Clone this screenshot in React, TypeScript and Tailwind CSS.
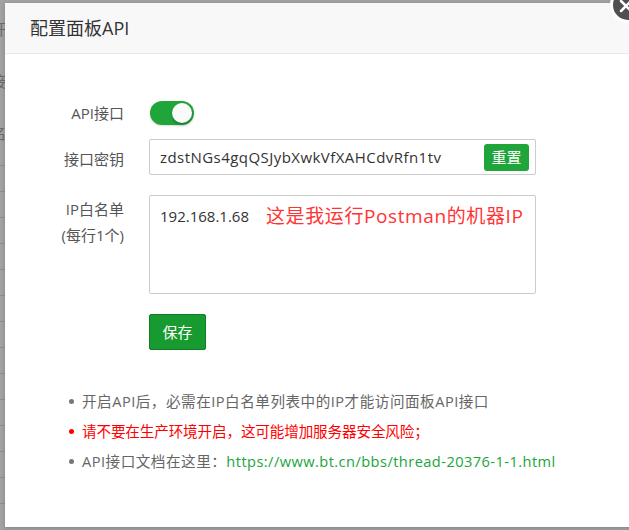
import React from "react";

const font = {
  fontFamily: '"Open Sans", "Noto Sans CJK SC", sans-serif',
};

function Toggle() {
  return (
    <div className="relative w-[44px] h-[24px] rounded-full bg-[#20a53a] shadow-[0_1px_2px_rgba(0,0,0,0.15)]">
      <div className="absolute right-[2px] top-[2px] w-[20px] h-[20px] rounded-full bg-[#fafafa] shadow-[0_2px_3px_rgba(0,0,0,0.25)]" />
    </div>
  );
}

function Bullet({ color, children }: { color: string; children: React.ReactNode }) {
  return (
    <li className="flex items-center h-[30px]">
      <span className={`w-[5px] h-[5px] rounded-full mr-[8px] ${color}`} />
      <span>{children}</span>
    </li>
  );
}

export default function App() {
  const rows = Array.from({ length: 14 });
  return (
    <div className="relative w-[629px] h-[530px] overflow-hidden bg-[#a2a2a2]" style={font}>
      {/* page underneath the overlay */}
      <div className="flex flex-col text-[#6a6a6a] text-[15px]">
        <div className="h-[165px] flex flex-col -ml-[9px] pt-[18px] gap-[30px] leading-[22px]">
          <span>开</span>
          <span>接</span>
          <span>名</span>
        </div>
        {rows.map((_, i) => (
          <div key={i} className="h-[26px] border-t border-[#8e8e8e] w-[40px] -ml-[9px] text-[#222]">
            {i === 10 ? <span className="leading-[26px]">S</span> : null}
          </div>
        ))}
      </div>

      {/* dialog */}
      <div className="absolute left-[5px] top-[3px] w-[660px] h-[524px] bg-white shadow-[0_1px_4px_rgba(0,0,0,0.2)]">
        <div className="h-[51px] bg-[#f8f8f8] border-b border-[#eaeaea] flex items-center pl-[25px]">
          <span className="text-[18px] text-[#333] leading-none">配置面板API</span>
        </div>

        <div className="flex flex-col">
          <div className="flex items-center mt-[47px] h-[24px]">
            <div className="w-[119px] text-right text-[15px] text-[#555]">API接口</div>
            <div className="ml-[26px]">
              <Toggle />
            </div>
          </div>

          <div className="flex items-center mt-[14px]">
            <div className="w-[119px] text-right text-[15px] text-[#555] pt-[5px]">接口密钥</div>
            <div className="ml-[25px] relative w-[387px] h-[36px] border border-[#ccc] rounded-[2px] flex items-center pl-[10px] text-[15px] text-[#333]">
              <span className="tracking-[0.45px]">zdstNGs4gqQSJybXwkVfXAHCdvRfn1tv</span>
              <div className="absolute right-[6px] top-[4px] w-[45px] h-[27px] rounded-[3px] bg-[#20a53a] text-white text-[15px] flex items-center justify-center">
                重置
              </div>
            </div>
          </div>

          <div className="flex items-start mt-[20px]">
            <div className="w-[119px] text-right text-[15px] text-[#555] leading-[26px] pt-[1px]">
              <div>IP白名单</div>
              <div>(每行1个)</div>
            </div>
            <div className="ml-[25px] relative w-[387px] h-[99px] border border-[#ccc] rounded-[2px] pl-[10px] pt-[9px] text-[15px] text-[#333] leading-[22px]">
              192.168.1.68
              <span className="absolute left-[116px] top-[8px] text-[19px] leading-[24px] tracking-[0.6px] text-[#ff3434]">
                这是我运行Postman的机器IP
              </span>
            </div>
          </div>

          <div className="flex mt-[20px]">
            <div className="w-[119px]" />
            <div className="ml-[25px] w-[57px] h-[36px] rounded-[2px] bg-[#179a30] border border-[#127d25] text-white text-[15px] flex items-center justify-center">
              保存
            </div>
          </div>

          <ul className="mt-[36px] pl-[64px] text-[14.6px] leading-[30px]">
            <Bullet color="bg-[#777]">
              <span className="text-[#666] tracking-[0.5px]">开启API后，必需在IP白名单列表中的IP才能访问面板API接口</span>
            </Bullet>
            <Bullet color="bg-[#f00]">
              <span className="text-[#f00] tracking-[-0.15px]">请不要在生产环境开启，这可能增加服务器安全风险；</span>
            </Bullet>
            <Bullet color="bg-[#777]">
              <span className="text-[#666] tracking-[0.5px]">API接口文档在这里：</span>
              <span className="text-[#20a53a] tracking-[0.45px]">https://www.bt.cn/bbs/thread-20376-1-1.html</span>
            </Bullet>
          </ul>
        </div>
      </div>

      {/* close button */}
      <div className="absolute left-[610px] top-[-13px] w-[36px] h-[36px] rounded-full bg-[#4f4f4f] border-[3px] border-white flex items-center justify-center">
        <svg width="16" height="16" viewBox="0 0 16 16" className="-ml-[4px] mt-[2px]">
          <path d="M3 3 L13 13 M13 3 L3 13" stroke="white" strokeWidth="2.5" strokeLinecap="round" />
        </svg>
      </div>
    </div>
  );
}
